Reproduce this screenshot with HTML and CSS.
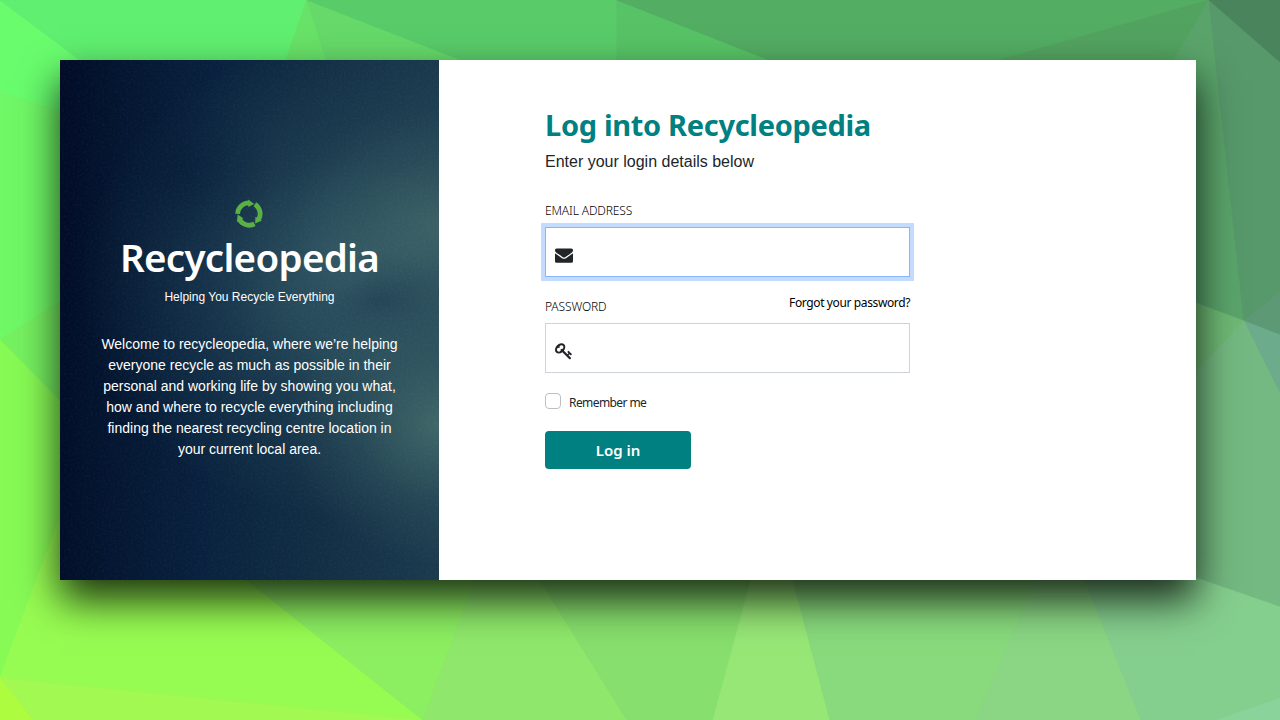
FILE: index.html
```html
<!DOCTYPE html>
<html lang="en">
<head>
<meta charset="utf-8">
<title>Log into Recycleopedia</title>
<link rel="stylesheet" href="styles.css">
</head>
<body>
<svg class="backdrop" viewBox="0 0 1280 720" aria-hidden="true">
  <path color="#69fd6e" d="M0 0L160 120V145L0 92z"/>
  <path color="#60ef70" d="M0 0H307L270 106H141z"/>
  <path color="#68e268" d="M307 0L265 120H346z"/>
  <path color="#66d96a" d="M307 0L346 120H665z"/>
  <path color="#59cb69" d="M307 0H617V130H641z"/>
  <path color="#57c366" d="M617 0L921 120H617z"/>
  <path color="#53ad63" d="M617 0H1209L791 120H921z"/>
  <path color="#53a360" d="M1209 0L791 120H1139z"/>
  <path color="#5aa46b" d="M1209 0L1139 120V282L1244 321z"/>
  <path color="#57996b" d="M1209 0L1280 62V292L1244 321z"/>
  <path color="#4a845d" d="M1209 0H1280V62z"/>
  <path color="#5e9975" d="M1280 292V335L1244 321z"/>
  <path color="#6cab8b" d="M1244 321L1280 335V394z"/>
  <path color="#6eb874" d="M1244 321L1150 286V430z"/>
  <path color="#74b981" d="M1244 321L1280 394V607L1150 562V420z"/>
  <path color="#70f867" d="M0 92L120 132V264L0 340z"/>
  <path color="#76f160" d="M0 340L120 264V508z"/>
  <path color="#87fa55" d="M0 340L130 472L0 678z"/>
  <path color="#97fc52" d="M0 678L75 477L247 580L423 720z"/>
  <path color="#a1f952" d="M0 678L423 720H33z"/>
  <path color="#adfc40" d="M0 678L33 720H0z"/>
  <path color="#8cee61" d="M209 550L423 720L486 550z"/>
  <path color="#8fe86b" d="M486 550L423 720H627L521 550z"/>
  <path color="#87df6d" d="M521 550L627 720H713L759 550z"/>
  <path color="#97e777" d="M759 550L713 720H830L785 550z"/>
  <path color="#88da7d" d="M785 550L830 720H975L1051 550z"/>
  <path color="#8ad684" d="M1051 550L975 720H1141L1073 550z"/>
  <path color="#85cf8e" d="M1073 550L1141 720H1217L1280 698V607L1150 562z"/>
  <path color="#8ad39a" d="M1217 720L1280 698V720z"/>
</svg>

<main class="card">
  <section class="intro">
    <svg class="grain" aria-hidden="true">
      <filter id="grain" x="0" y="0" width="100%" height="100%">
        <feTurbulence type="fractalNoise" baseFrequency=".45" numOctaves="2" seed="4"/>
        <feColorMatrix values="0 0 0 0 .6  0 0 0 0 .75  0 0 0 0 .8  .9 0 0 0 -.35"/>
      </filter>
      <rect width="100%" height="100%" filter="url(#grain)"/>
    </svg>
    <div class="intro-body">
      <svg class="logo" viewBox="0 0 28 28" aria-hidden="true">
        <defs>
          <g id="arrow">
            <path d="M2.700 13.800A11.300 11.300 0 0 1 14 2.900" fill="none" stroke="#5bb045" stroke-width="4.800"/>
            <path d="M13.200-.5L19.200 3.900L13.200 7z" fill="#5bb045"/>
          </g>
        </defs>
        <use href="#arrow"/>
        <use href="#arrow" transform="rotate(120 14 14)"/>
        <use href="#arrow" transform="rotate(240 14 14)"/>
      </svg>
      <h1 class="brand">Recycleopedia</h1>
      <p class="tagline">Helping You Recycle Everything</p>
      <p class="welcome">Welcome to recycleopedia, where we’re helping<br>everyone recycle as much as possible in their<br>personal and working life by showing you what,<br>how and where to recycle everything including<br>finding the nearest recycling centre location in<br>your current local area.</p>
    </div>
  </section>

  <form class="login">
    <h2 class="title">Log into Recycleopedia</h2>
    <p class="hint">Enter your login details below</p>
    <div class="row"><label class="label">EMAIL ADDRESS</label></div>
    <div class="field focused">
      <svg class="icon" viewBox="0 0 1792 1792" aria-hidden="true"><path d="M1792 710v794q0 66-30 113t-80 47h-1572q-50 0-80-47t-30-113v-794q44 49 101 87 362 246 497 345 57 42 92.500 65.500t94.500 48 110 24.500h2q51 0 110-24.500t94.500-48 92.500-65.500q170-123 498-345 57-39 100-87zm0-294q0 79-49 151t-122 123q-376 261-468 325-10 7-42.500 31t-54 38.500-52 32.500-57.500 27-50 9h-2q-23 0-50-9t-57.500-27-52-32.500-54-38.500-42.500-31q-91-64-262-182.500t-205-142.500q-62-42-117-115.500t-55-136.500q0-78 41.500-130t118.500-52h1472q65 0 112.500 47t47.500 113z"/></svg>
    </div>
    <div class="row password-row"><label class="label">PASSWORD</label><a class="forgot">Forgot your password?</a></div>
    <div class="field">
      <svg class="icon" viewBox="0 0 1792 1792" aria-hidden="true"><path d="M832 512q0-80-56-136t-136-56-136 56-56 136q0 42 19 83-41-19-83-19-80 0-136 56t-56 136 56 136 136 56 136-56 56-136q0-42-19-83 41 19 83 19 80 0 136-56t56-136zm851 704q0 17-49 66t-66 49q-9 0-28.500-16t-36.500-33-38.500-40-24.500-26l-96 96 220 220q28 28 28 68 0 42-39 81t-81 39q-40 0-68-28l-671-671q-176 131-365 131-163 0-265.500-102.500t-102.500-265.500q0-160 95-313t248-248 313-95q163 0 265.500 102.500t102.500 265.500q0 189-131 365l355 355 96-96q-3-3-26-24.500t-40-38.500-33-36.500-16-28.500q0-17 49-66t66-49q13 0 23 10 6 6 46 44.500t82 79.500 86.500 86 73 78 28.500 41z"/></svg>
    </div>
    <div class="remember"><span class="checkbox"></span><span class="remember-text">Remember me</span></div>
    <button class="submit" type="button">Log in</button>
  </form>
</main>
</body>
</html>
```

FILE: styles.css
```css
* { box-sizing: border-box; }
body {
  margin: 0;
  height: 720px;
  padding: 60px;
  overflow: hidden;
  font-family: "Noto Sans", "Open Sans", sans-serif;
  color: #212529;
}
h1, h2, p { margin: 0; white-space: nowrap; }
.backdrop { position: absolute; inset: 0; width: 1280px; height: 720px; z-index: -1; background: #6fc070; }
.backdrop path { fill: currentColor; stroke: currentColor; stroke-width: .8px; stroke-linejoin: round; }
.card {
  display: flex;
  width: 1136px;
  height: 520px;
  background: #fff;
  box-shadow: 0 20px 38px rgba(0, 0, 0, .8);
}
.intro {
  position: relative;
  width: 379px;
  padding-top: 139px;
  overflow: hidden;
  color: #fff;
  text-align: center;
  background:
    radial-gradient(ellipse 90px 50px at 320px 240px, rgba(26, 54, 76, .55), rgba(26, 54, 76, .2) 50%, transparent),
    radial-gradient(ellipse 100px 80px at 120px 110px, rgba(4, 25, 54, .5), rgba(4, 25, 54, .18) 55%, transparent),
    radial-gradient(ellipse 150px 120px at 379px 165px, rgba(74, 112, 108, .6), rgba(74, 112, 108, .2) 55%, transparent),
    radial-gradient(ellipse 150px 140px at 379px 365px, rgba(76, 118, 112, .7), rgba(76, 118, 112, .22) 55%, transparent),
    radial-gradient(ellipse 270px 240px at 290px 220px, rgba(62, 104, 112, .75), rgba(52, 92, 104, .32) 50%, transparent),
    linear-gradient(92deg, #010b26 0%, #03142f 14%, #08203d 38%, #102c43 65%, #1b3a4e 100%);
}
.grain { position: absolute; inset: 0; width: 100%; height: 100%; opacity: .09; }
.intro-body { position: relative; display: flex; flex-direction: column; align-items: center; }
.logo { width: 28px; height: 28px; margin: 1px 2px 0 0; overflow: visible; }
.brand { margin-top: 5px; font-size: 38.500px; line-height: 48px; font-weight: 600; letter-spacing: -.7px; }
.tagline { margin-top: 7px; font: 12px/18px "Liberation Sans", Arial, sans-serif; }
.welcome { margin-top: 28px; font: 14px/21px "Liberation Sans", Arial, sans-serif; }
.login { width: 471px; padding: 45px 0 0 106px; }
.title { font-size: 29px; line-height: 40px; font-weight: 700; letter-spacing: -.32px; color: #008080; }
.hint { margin-top: 5px; font: 16px/24px "Liberation Sans", Arial, sans-serif; }
.row { display: flex; justify-content: space-between; height: 18px; margin-top: 28px; white-space: nowrap; }
.label { font-size: 12px; line-height: 18px; font-weight: 300; letter-spacing: -.12px; color: #000; }
.field {
  height: 50px;
  margin-top: 7px;
  padding: 18px 9px;
  border: 1px solid #ced4da;
}
.focused { border-color: #86b7fe; box-shadow: 0 0 0 4px #c2dbfe; }
.icon { display: block; width: 18px; height: 18px; fill: #212529; }
.password-row { margin-top: 21px; }
.forgot { margin-top: -4px; font-size: 12px; line-height: 18px; letter-spacing: -.38px; color: #000; }
.remember { display: flex; gap: 8px; height: 18px; margin-top: 20px; font-size: 12px; line-height: 19px; letter-spacing: -.58px; }
.checkbox { width: 16px; height: 16px; border: 1px solid #bfbfbf; border-radius: 4px; }
.submit {
  display: block;
  width: 146px;
  height: 38px;
  margin-top: 20px;
  padding: 0;
  border: 0;
  border-radius: 4px;
  background: #008080;
  color: #fff;
  font: 600 15px/38px "Noto Sans", sans-serif;
}
```
